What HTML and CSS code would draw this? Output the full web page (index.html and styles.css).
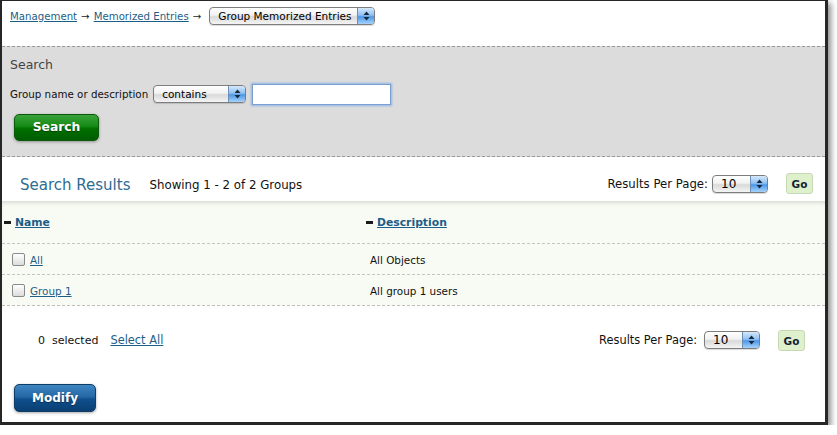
FILE: index.html
```html
<!DOCTYPE html>
<html>
<head>
<meta charset="utf-8">
<link rel="stylesheet" href="styles.css">
</head>
<body>
<div class="frame">
  <div class="crumbs">
    <a href="#">Management</a><span class="arr">→</span><a href="#">Memorized Entries</a><span class="arr arr-last">→</span>
    <span class="aqua sel-group"><span class="val">Group Memorized Entries</span><span class="spin"><svg width="7" height="10" viewBox="0 0 7 10"><path d="M3.5 0.5 L6.5 4 L0.5 4 Z M0.5 6 L6.5 6 L3.5 9.5 Z" fill="#1a2a3a"/></svg></span></span>
  </div>

  <div class="search">
    <div class="search-title">Search</div>
    <div class="search-row">
      <span class="label">Group name or description</span>
      <span class="aqua sel-contains"><span class="val">contains</span><span class="spin"><svg width="7" height="10" viewBox="0 0 7 10"><path d="M3.5 0.5 L6.5 4 L0.5 4 Z M0.5 6 L6.5 6 L3.5 9.5 Z" fill="#1a2a3a"/></svg></span></span>
      <span class="textbox"></span>
    </div>
    <span class="btn btn-green">Search</span>
  </div>

  <div class="results-head">
    <span class="results-title">Search Results</span>
    <span class="showing">Showing 1 - 2 of 2 Groups</span>
    <span class="rpp">Results Per Page:</span>
    <span class="aqua sel-rpp"><span class="val">10</span><span class="spin"><svg width="7" height="10" viewBox="0 0 7 10"><path d="M3.5 0.5 L6.5 4 L0.5 4 Z M0.5 6 L6.5 6 L3.5 9.5 Z" fill="#1a2a3a"/></svg></span></span>
    <span class="go">Go</span>
  </div>

  <div class="table">
    <div class="row head">
      <div class="c1"><span class="minus"></span><a href="#">Name</a></div>
      <div class="c2"><span class="minus"></span><a href="#">Description</a></div>
    </div>
    <div class="row">
      <div class="c1"><span class="cb"></span><a href="#">All</a></div>
      <div class="c2 data">All Objects</div>
    </div>
    <div class="row">
      <div class="c1"><span class="cb"></span><a href="#">Group 1</a></div>
      <div class="c2 data">All group 1 users</div>
    </div>
  </div>

  <div class="foot">
    <span class="count">0&nbsp; selected</span>
    <a href="#" class="selall">Select All</a>
    <span class="rpp">Results Per Page:</span>
    <span class="aqua sel-rpp"><span class="val">10</span><span class="spin"><svg width="7" height="10" viewBox="0 0 7 10"><path d="M3.5 0.5 L6.5 4 L0.5 4 Z M0.5 6 L6.5 6 L3.5 9.5 Z" fill="#1a2a3a"/></svg></span></span>
    <span class="go">Go</span>
  </div>

  <div class="modify-wrap">
    <span class="btn btn-blue">Modify</span>
  </div>
</div>
</body>
</html>
```
FILE: styles.css
```css
html, body {
  margin: 0;
  padding: 0;
  background: #ffffff;
}
body {
  font-family: "DejaVu Sans", Verdana, sans-serif;
  font-size: 10px;
  color: #111;
}
a {
  color: #1d5e87;
  text-decoration: underline;
}
.frame {
  width: 823px;
  height: 421px;
  border-style: solid;
  border-color: #262626;
  border-width: 1px 3px 3px 2px;
  background: #fff;
  box-shadow: 3px 3px 6px rgba(0,0,0,0.45);
  display: flex;
  flex-direction: column;
  overflow: hidden;
}
.crumbs {
  height: 45px;
  box-sizing: border-box;
  padding: 6px 0 0 8px;
  display: flex;
  align-items: flex-start;
  line-height: 18px;
  white-space: nowrap;
  font-size: 10.2px;
}
.crumbs a { margin-top: 1px; }
.arr {
  margin: 1px 4px 0 4px;
  color: #222;
}
.arr-last { margin-right: 8px; }
.aqua {
  display: inline-flex;
  align-items: stretch;
  box-sizing: border-box;
  height: 18px;
  border: 1px solid #7d7d7d;
  border-radius: 4px;
  background: linear-gradient(#ffffff 0%, #f1f1f1 45%, #d9d9d9 55%, #f4f4f4 100%);
  box-shadow: 0 1px 1px rgba(0,0,0,0.15);
  overflow: hidden;
  color: #000;
  font-size: 10.5px;
  white-space: nowrap;
}
.aqua .val {
  flex: 1;
  padding-left: 8px;
  line-height: 16px;
}
.aqua .spin {
  width: 16px;
  display: flex;
  align-items: center;
  justify-content: center;
  border-left: 1px solid #6c8fb5;
  background: linear-gradient(#d5e8fb 0%, #8fc1f2 45%, #4d97e6 55%, #a6d2fb 100%);
}
.sel-group { width: 166px; }
.sel-contains { width: 93px; }
.sel-rpp { width: 56px; font-size: 12px; }

.search {
  height: 111px;
  box-sizing: border-box;
  background: #dcdcdc;
  border-top: 1px dashed #9a9a9a;
  border-bottom: 1px dashed #9a9a9a;
  padding: 10px 0 0 8px;
}
.search-title {
  font-size: 12.5px;
  color: #444;
  line-height: 16px;
}
.search-row {
  display: flex;
  align-items: center;
  margin-top: 10px;
  height: 22px;
  font-size: 10.3px;
}
.label { margin-right: 5px; }
.textbox {
  display: inline-block;
  width: 137px;
  height: 19px;
  margin-left: 6px;
  background: #fff;
  border: 1px solid #7b9fcf;
  box-shadow: 0 0 2px 1px #8fb5e6;
}
.btn {
  display: inline-block;
  color: #fff;
  font-weight: bold;
  text-align: center;
  border-radius: 5px;
  box-shadow: 0 1px 3px rgba(0,0,0,0.35);
}
.btn-green {
  margin: 9px 0 0 4px;
  width: 83px;
  height: 25px;
  line-height: 25px;
  font-size: 12.3px;
  border: 1px solid #0b5a0b;
  background: linear-gradient(#3aa33a 0%, #158a15 45%, #006f00 55%, #005d00 100%);
  text-shadow: 0 1px 1px rgba(0,0,0,0.4);
}
.btn-blue {
  width: 80px;
  height: 26px;
  line-height: 26px;
  font-size: 12px;
  border: 1px solid #0e3d68;
  background: linear-gradient(#3f85c0 0%, #2468a6 45%, #0f4f8c 55%, #0a3f73 100%);
  text-shadow: 0 1px 1px rgba(0,0,0,0.4);
}

.results-head {
  height: 44px;
  box-sizing: border-box;
  padding: 9px 12px 0 18px;
  display: flex;
  align-items: center;
}
.results-title {
  font-size: 15px;
  color: #2d6b92;
  margin-right: 19px;
  margin-top: 2px;
}
.showing {
  font-size: 11.8px;
  color: #111;
  flex: 1;
  margin-top: 2px;
}
.rpp {
  font-size: 11.7px;
  margin-right: 4px;
}
.go {
  margin-left: 18px;
  width: 27px;
  height: 21px;
  line-height: 21px;
  text-align: center;
  box-sizing: border-box;
  font-weight: bold;
  font-size: 10.5px;
  color: #123;
  background: #dff0cc;
  border: 1px solid #c6d9b3;
  border-radius: 3px;
}

.table {
  background: #f8fbf3;
  box-shadow: inset 0 4px 5px -3px rgba(0,0,0,0.18);
  border-bottom: 1px dashed #bdbdbd;
  font-size: 10.4px;
}
.row {
  display: flex;
  align-items: center;
  height: 30px;
  border-top: 1px dashed #c5c5c5;
}
.row.head {
  height: 42px;
  border-top: none;
  font-weight: bold;
  font-size: 10.8px;
}
.row:not(.head) { padding-top: 1px; height: 29px; }
.c1 {
  width: 362px;
  display: flex;
  align-items: center;
  padding-left: 2px;
}
.c2 {
  display: flex;
  align-items: center;
}
.c2.data { padding-left: 4px; }
.minus {
  display: inline-block;
  width: 7px;
  height: 3px;
  background: #1a1a1a;
  margin-right: 4px;
}
.cb {
  display: inline-block;
  width: 11px;
  height: 11px;
  border: 1px solid #8a8a8a;
  border-radius: 2px;
  background: linear-gradient(#ffffff, #dcdcdc);
  margin: 0 5px 0 8px;
}
.row:not(.head) .c1 a { margin-top: 1px; }

.foot {
  height: 64px;
  display: flex;
  align-items: center;
  padding: 0 20px 0 36px;
  margin-top: 2px;
}
.count {
  font-size: 11px;
  margin-right: 12px;
}
.selall {
  font-size: 11.4px;
  flex: 1;
}
.foot .rpp { font-size: 11.4px; margin-right: 7px; }
.modify-wrap {
  padding: 12px 0 0 12px;
}
```
